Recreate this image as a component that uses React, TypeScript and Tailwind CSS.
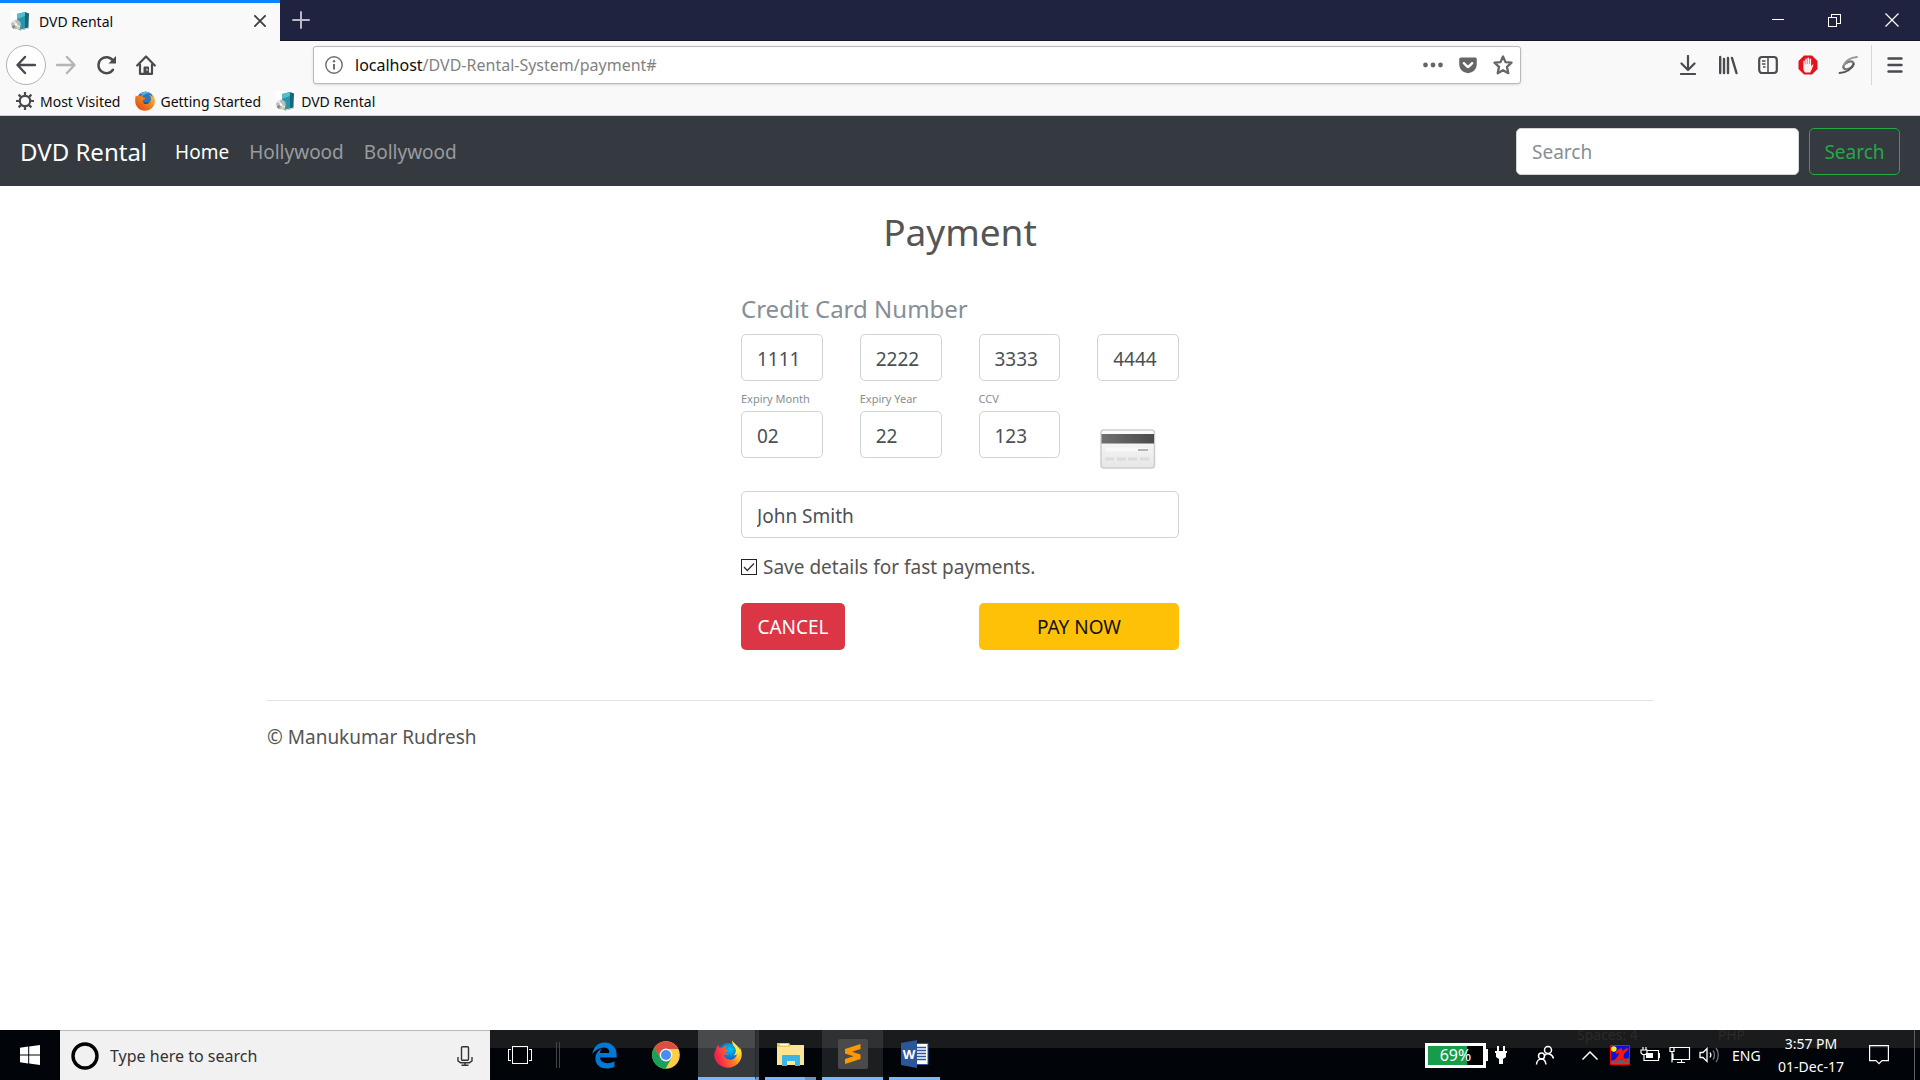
import type { ReactNode } from "react";
import { FaGetPocket } from "react-icons/fa";
import { FaEdgeLegacy } from "react-icons/fa6";

const uiFont = "font-['Noto_Sans',sans-serif]";

function DvdIcon() {
  return (
    <svg viewBox="0 0 20 20" className="size-5 shrink-0" aria-hidden="true">
      <rect width="20" height="20" fill="#fff" />
      <path d="M6 3 14 1v15l-6 3-2-2Z" fill="#2796a8" />
      <path d="M6 3 14 1v4L6 8Z" fill="#55bccb" />
      <path d="m14 1 4 1.5-.6 15L9 19.4l-.8-.7L14 16Z" fill="#146879" />
      <path d="m9 18.5 8.4-2v1L9 19.4Z" fill="#dfe9ea" />
      <circle cx="5" cy="13.5" r="4.8" fill="#b8bcbc" />
      <path d="M5 13.5 1 11a4.8 4.8 0 0 1 3-2.2ZM5 13.5l4.4 2a4.8 4.8 0 0 1-2.6 2.4Z" fill="#e9e9e9" />
      <path d="M5 13.5 3 18a4.8 4.8 0 0 1-2.3-2.4Z" fill="#85898a" />
      <circle cx="5" cy="13.5" r="1.3" fill="#fff" />
      <circle cx="7.3" cy="17.2" r="1.6" fill="#d9d39a" />
    </svg>
  );
}

function FirefoxOld() {
  return (
    <svg viewBox="0 0 20 20" className="size-5 shrink-0" aria-hidden="true">
      <defs>
        <linearGradient id="ffo" x1="0" y1="1" x2="1" y2="0">
          <stop offset="0" stopColor="#d8401c" />
          <stop offset=".6" stopColor="#f28a1c" />
          <stop offset="1" stopColor="#ffd84a" />
        </linearGradient>
      </defs>
      <circle cx="10.5" cy="9.2" r="8.8" fill="#2f78bd" />
      <path d="M5 2.5C8 .6 13 0 16 3c-2-1-5-1-7 1Z" fill="#5fb4e6" />
      <path d="M1 4c.3 1 .7 1.3 1.3 1.4C3 4.700 5 4.500 6 5c.7-.8 1.700-1.200 2.600-1.200-1 .8-1.300 1.700-1.200 2.500l2.900.7c-.2 1-1.500 1.500-2.700 2.200.5 2.800 3 3.800 5.400 3 2-.7 3.200-2.500 3-4.700-.2-1.800-1-3-2-4 2 .7 3 2 3.500 3.200 0-1.600-.4-2.800-1.300-4C19 4.500 20.300 7.500 19.900 11c-.6 5-4.700 8.800-9.900 8.800C4.400 19.800.2 15.500.2 10 .2 7.500.3 5.500 1 4Z" fill="url(#ffo)" />
      <path d="M10 11c1 1 3 1 4.500-.3-.8 2.600-4.500 3.300-6.500 1Z" fill="#1f4f8f" />
    </svg>
  );
}

function FirefoxNew() {
  return (
    <svg viewBox="0 0 28 28" className="size-7" aria-hidden="true">
      <defs>
        <linearGradient id="ffn" x1=".1" y1=".6" x2="1" y2=".3">
          <stop offset="0" stopColor="#f5204f" />
          <stop offset=".45" stopColor="#ff6a2b" />
          <stop offset=".8" stopColor="#ffb82a" />
          <stop offset="1" stopColor="#fff04a" />
        </linearGradient>
        <radialGradient id="ffb" cx=".6" cy=".3" r=".6">
          <stop offset="0" stopColor="#00c4f5" />
          <stop offset="1" stopColor="#0a4fc9" />
        </radialGradient>
      </defs>
      <circle cx="14" cy="13.500" r="10.500" fill="url(#ffb)" />
      <path d="M18.500.3c-.5 3 .4 4.700 2 6.500 2.300 2.700 1.700 6.500-.6 8.600 1.500-.3 2.300-1 2.800-1.800-.3 4-3.400 6.500-7.200 6-3.500-.4-5.300-2.500-5.300-4.800 1.300-.6 2.800-.5 4 .3-.3-1.300-1.500-2-3.200-1.800.2-1.300 2.500-1.800 3-3-.1-.7-1.500-.7-3-1 .2-1.500.9-2.700 2.100-3.500-1.900 0-3.400.8-4.500 2-1-.3-2-.3-2.900-.1-.6-.7-.9-1.600-1-2.600C3 6.300 2 8 1.600 10.200.4 12 .1 14 .3 16c1 6.800 6.700 11.700 13.700 11.700 7.800 0 13.700-6 13.700-13.400 0-3.200-.9-5.500-2.300-7.200.1 1 .1 1.600-.1 2.500C24.500 5.500 18.700 3.500 18.500.3Z" fill="url(#ffn)" />
      <path d="M18.500.3c-.5 3 .4 4.700 2 6.500 2.300 2.700 1.700 6.500-.6 8.600 2-.3 3.500-1.500 4.200-3 .3 3-1 6-3.600 8 3.500-1.200 5.300-5.500 4.800-10.800C24.500 5.500 18.700 3.500 18.500.3Z" fill="#ffe83c" />
    </svg>
  );
}

function ChromeIcon() {
  return (
    <svg viewBox="0 0 28 28" className="size-7" aria-hidden="true">
      <circle cx="14" cy="14" r="13.800" fill="#ffcd42" />
      <path d="M14 14 2 7.100A13.800 13.800 0 0 1 26 7.200L26.300 8H14Z" fill="#dc4e41" />
      <path d="M2 7.100A13.800 13.800 0 0 0 13.500 27.800L19.500 17 14 14 8 17Z" fill="#1b9f5d" />
      <path d="M2 7.100 8.500 17 14 14V8Z" fill="#dc4e41" />
      <path d="M2 7.100 8.800 17.300A6.300 6.300 0 0 0 15.500 20L13.500 27.800A13.800 13.800 0 0 1 2 7.100Z" fill="#1b9f5d" />
      <circle cx="14" cy="14" r="6.400" fill="#f1f1f1" />
      <circle cx="14" cy="14" r="5" fill="#4c8bf5" />
    </svg>
  );
}

function ToolbarIcon({ children, label, className = "size-10" }: { children: ReactNode; label: string; className?: string }) {
  return (
    <button type="button" aria-label={label} className={`flex items-center justify-center ${className}`}>
      {children}
    </button>
  );
}

function TitleBar() {
  return (
    <div className="flex h-[41px] items-stretch border-b border-[#14162c] bg-[#202340]">
      <div className="-mb-px flex w-[280px] items-center gap-2 border-t-[3px] border-[#0a84ff] bg-[#f9f9fa] pr-3 pb-0.5 pl-[11px]">
        <DvdIcon />
        <span className="flex-1 text-[14px] text-[#0c0c0d]">DVD Rental</span>
        <button type="button" aria-label="Close tab" className="flex size-4 items-center justify-center">
          <svg viewBox="0 0 12 12" className="size-3 stroke-[#3e3e40]" strokeWidth="1.800" strokeLinecap="round">
            <path d="M.9.9l10.200 10.200M11.100.9.9 11.100" />
          </svg>
        </button>
      </div>
      <ToolbarIcon label="New tab" className="w-[42px]">
        <svg viewBox="0 0 18 18" className="size-[18px] stroke-[#b9bac4]" strokeWidth="2" strokeLinecap="round">
          <path d="M9 1v16M1 9h16" />
        </svg>
      </ToolbarIcon>
      <div className="ml-auto flex stroke-white text-white">
        <ToolbarIcon label="Minimize" className="w-[57px]">
          <svg viewBox="0 0 12 12" className="size-3" fill="none" shapeRendering="crispEdges"><path d="M0 5.500h12" /></svg>
        </ToolbarIcon>
        <ToolbarIcon label="Restore" className="w-[57px]">
          <svg viewBox="0 0 13 13" className="size-[13px]" fill="none" shapeRendering="crispEdges"><path d="M.5 3.500h8v9h-8zM3.500 3.500v-3h9v9h-4" /></svg>
        </ToolbarIcon>
        <ToolbarIcon label="Close" className="w-[57px]">
          <svg viewBox="0 0 14 14" className="size-3.5" fill="none"><path d="m.5.5 13 13m0-13-13 13" strokeWidth="1.200" /></svg>
        </ToolbarIcon>
      </div>
    </div>
  );
}

function AddressRow() {
  return (
    <div className="flex h-[48px] items-center bg-[#f9f9fa] stroke-[#4a4a4f] pr-[3px] pl-[6px]">
      <button type="button" aria-label="Back" className="flex size-10 items-center justify-center rounded-full border border-[#b1b1b3] bg-white">
        <svg viewBox="0 0 20 20" className="size-5" fill="none" strokeWidth="2.400" strokeLinecap="round" strokeLinejoin="round"><path d="M19 10H2M9 2 1.500 10 9 18" /></svg>
      </button>
      <ToolbarIcon label="Forward">
        <svg viewBox="0 0 20 20" className="size-5 stroke-[#b5b5b7]" fill="none" strokeWidth="2.400" strokeLinecap="round" strokeLinejoin="round"><path d="M1 10h17M11 2l7.500 8L11 18" /></svg>
      </ToolbarIcon>
      <ToolbarIcon label="Reload">
        <svg viewBox="0 0 20 20" className="size-5" fill="none" strokeWidth="2.400" strokeLinecap="round"><path d="M17 14.800A8 8 0 1 1 17 5.600" /><path d="M20 1v7.500h-7.500Z" fill="#4a4a4f" stroke="none" /></svg>
      </ToolbarIcon>
      <ToolbarIcon label="Home">
        <svg viewBox="0 0 20 20" className="size-5" fill="none" strokeWidth="2.200" strokeLinecap="round" strokeLinejoin="round"><path d="M1.200 10.500 10 1.500l8.800 9" /><path d="M4 9.500V18.800h12V9.500" /><path d="M8 18v-6h4.500v6Z" fill="#4a4a4f" strokeWidth="1" /><path d="M11 14v1.500" stroke="#fff" strokeWidth="1" /></svg>
      </ToolbarIcon>
      <div className="mr-[147px] ml-[147px] flex h-[38px] flex-1 items-center rounded-[3px] border border-[#b9b9bb] bg-white px-[11px] shadow-sm">
        <svg viewBox="0 0 18 18" className="mr-[12px] size-[18px] stroke-[#6d6d6e]" fill="none" strokeWidth="1.400"><circle cx="9" cy="9" r="8.200" /><path d="M9 8v5.500" strokeWidth="2" /><circle cx="9" cy="5.200" r="1.200" fill="#6d6d6e" stroke="none" /></svg>
        <a href="#" className="flex-1 text-[16px] text-[#828283]"><span className="text-[#0c0c0d]">localhost</span>/DVD-Rental-System/payment#</a>
        <div className="flex items-center gap-[15px] text-[#666667]">
          <button type="button" aria-label="Page actions"><svg viewBox="0 0 20 20" className="size-5 stroke-none" fill="currentColor"><circle cx="2.500" cy="10" r="2.400" /><circle cx="10" cy="10" r="2.400" /><circle cx="17.500" cy="10" r="2.400" /></svg></button>
          <button type="button" aria-label="Save to Pocket"><FaGetPocket className="size-5 stroke-none" /></button>
          <button type="button" aria-label="Bookmark" className="-mr-1"><svg viewBox="0 0 20 20" className="size-5 stroke-[#666667]" fill="none" strokeWidth="2.300" strokeLinejoin="round"><path d="m10 1.500 2.500 5.600 6 .6-4.500 4.200 1.300 6.300L10 15.200l-5.300 3 1.300-6.300L1.500 7.700l6-.6Z" /></svg></button>
        </div>
      </div>
      <div className="flex items-center">
        <ToolbarIcon label="Downloads"><svg viewBox="0 0 20 20" className="size-5" fill="none" strokeWidth="2.200" strokeLinecap="round" strokeLinejoin="round"><path d="M10 1v13M3.500 8.500 10 15l6.500-6.500M3 19h14" /></svg></ToolbarIcon>
        <ToolbarIcon label="Library"><svg viewBox="0 0 20 20" className="size-5" fill="none" strokeWidth="2.400" strokeLinecap="round"><path d="M2.200 2v16M6 4v14M10 3v15M14 3l4.500 15" /></svg></ToolbarIcon>
        <ToolbarIcon label="Sidebars"><svg viewBox="0 0 20 20" className="size-5" fill="none" strokeWidth="2.200"><rect x="1.200" y="2" width="17.600" height="16" rx="3" /><path d="M10 2v16M4 6h3.500M4 9h3.500M5 12h2.500" strokeWidth="1.500" /></svg></ToolbarIcon>
        <ToolbarIcon label="Ad blocker">
          <svg viewBox="0 0 20 20" className="size-5 stroke-none"><path d="M6 .500h8L19.500 6v8L14 19.500H6L.500 14V6Z" fill="#e51219" /><path d="M7 17.500C5.700 16 5.200 14 5.400 11.500V6.500c0-1.200 1.400-1.200 1.400 0v3h.5V4.300c0-1.200 1.600-1.200 1.600 0V9h.5V3.300c0-1.200 1.600-1.200 1.600 0V9h.5V4.300c0-1.200 1.600-1.200 1.600 0v7.200c.7-1.100 1.300-2.200 2.400-1.900-.9 2.800-1.800 5.600-3.300 7.900Z" fill="#f5f0f0" /></svg>
        </ToolbarIcon>
        <ToolbarIcon label="Extension">
          <svg viewBox="0 0 20 20" className="size-5" fill="none" strokeLinecap="round"><ellipse cx="10.500" cy="10.300" rx="5.500" ry="3.300" transform="rotate(-28 10.500 10.300)" stroke="#777" strokeWidth="2.400" /><path d="M19 2C14 2.500 8 5 5.800 10" stroke="#999" strokeWidth="1.800" /><path d="M1.500 18C8 17.500 13.500 14.500 15.500 9" stroke="#555" strokeWidth="1.800" /></svg>
        </ToolbarIcon>
      </div>
      <div className="ml-[3px] h-10 w-px bg-[#d7d7db]" />
      <ToolbarIcon label="Menu" className="h-10 w-[45px]"><svg viewBox="0 0 16 18" className="h-[18px] w-4" fill="none" strokeWidth="2.400" strokeLinecap="round"><path d="M1.500 2.500h13M1.500 9h13M1.500 15.500h13" /></svg></ToolbarIcon>
    </div>
  );
}

function Bookmarks() {
  return (
    <div className="flex h-[27px] items-center gap-[15px] border-b border-[#d0d0d2] bg-[#f9f9fa] pb-0.5 pl-[15px] text-[14px] text-[#0c0c0d]">
      <a href="#" className="flex items-center gap-[5px]">
        <svg viewBox="0 0 20 20" className="size-5" fill="none" stroke="#4a4a4f"><circle cx="10" cy="10" r="5.200" strokeWidth="2.200" /><path d="M10 1v4M10 15v4M1 10h4M15 10h4M3.600 3.600l2.800 2.800M13.600 13.600l2.800 2.800M3.600 16.400l2.800-2.800M13.600 6.400l2.800-2.800" strokeWidth="2.200" /></svg>
        Most Visited
      </a>
      <a href="#" className="flex items-center gap-[5px]"><FirefoxOld />Getting Started</a>
      <a href="#" className="flex items-center gap-[5px]"><DvdIcon />DVD Rental</a>
    </div>
  );
}

function SiteNav() {
  return (
    <nav className="flex h-[70px] items-center bg-[#343a40] px-5 text-[19px]">
      <a href="#" className="mr-7 pt-0.5 text-[24px] text-white">DVD Rental</a>
      <div className="flex gap-5 pt-0.5 text-[#999c9f]">
        <a href="#" className="text-white">Home</a>
        <a href="#">Hollywood</a>
        <a href="#">Bollywood</a>
      </div>
      <form className="ml-auto flex gap-2.5" onSubmit={(e) => e.preventDefault()}>
        <input type="search" aria-label="Search" placeholder="Search" className="h-[47px] w-[283px] rounded-[5px] border border-[#ced4da] bg-white px-[15px] pt-0.5 placeholder:text-[#868e96]" />
        <button type="submit" className="h-[47px] w-[91px] rounded-[5px] border border-[#28a745] pt-0.5 text-[#28a745]">Search</button>
      </form>
    </nav>
  );
}

function Field({ value, label, id }: { value: string; label: string; id: string }) {
  return <input id={id} aria-label={label} defaultValue={value} className="h-[47px] w-full min-w-0 rounded-[5px] border border-[#ced4da] bg-white px-[15px] pt-0.5 text-[#495057]" />;
}

function CardIcon() {
  return (
    <svg viewBox="0 0 56 40" className="h-10 w-14" role="img" aria-label="Credit card">
      <defs>
        <linearGradient id="cardbody" x1="0" y1="0" x2="0" y2="1"><stop offset="0" stopColor="#fdfdfd" /><stop offset="1" stopColor="#e6e6e6" /></linearGradient>
        <linearGradient id="cardband" x1="0" y1="0" x2="1" y2="0"><stop offset="0" stopColor="#707070" /><stop offset="1" stopColor="#4b4b4b" /></linearGradient>
      </defs>
      <rect x="1" y="1" width="53.500" height="38" rx="3" fill="url(#cardbody)" stroke="#cdcdcd" strokeWidth="1.500" />
      <rect x="1.500" y="5" width="52.500" height="9.500" fill="url(#cardband)" />
      <rect x="5" y="18" width="44" height="5" fill="#f9f9f9" stroke="#e9e9e9" strokeWidth=".5" />
      <path d="M38 21h10" stroke="#aaa" strokeWidth="1.800" />
      <path d="M5 30h9M17 30h9M28 30h9M40 30h9" stroke="#dcdcdc" strokeWidth="3" />
    </svg>
  );
}

const cardNumbers = ["1111", "2222", "3333", "4444"];
const cardDetails = [
  { id: "month", label: "Expiry Month", value: "02" },
  { id: "year", label: "Expiry Year", value: "22" },
  { id: "ccv", label: "CCV", value: "123" },
];

function PaymentPage() {
  return (
    <main className="flex-1 bg-white px-[267px] text-[19px] text-[#555]">
      <h2 className="pt-5 text-center text-[37px] leading-[52px]">Payment</h2>
      <form className="mx-auto w-[438px] pt-8" onSubmit={(e) => e.preventDefault()}>
        <fieldset>
          <legend className="pb-1.5 text-[24px] leading-[38px] text-[#868e96]">Credit Card Number</legend>
          <div className="grid grid-cols-4 gap-x-[37px]">
            {cardNumbers.map((n, i) => (
              <Field key={n} id={`card-${i}`} label={`Card number part ${i + 1}`} value={n} />
            ))}
          </div>
        </fieldset>
        <div className="grid grid-cols-4 gap-x-[37px] pt-2">
          {cardDetails.map((d) => (
            <div key={d.id}>
              <label htmlFor={d.id} className="block pb-0.5 text-[11px] leading-5 whitespace-nowrap text-[#868e96]">{d.label}</label>
              <Field id={d.id} label={d.label} value={d.value} />
            </div>
          ))}
          <div className="pt-10 pl-[3px]"><CardIcon /></div>
        </div>
        <div className="pt-[22px]"><Field id="name" label="Name on card" value="John Smith" /></div>
        <label className="mt-[14px] flex items-center gap-1.5 leading-[30px]">
          <span className="relative grid size-4 place-items-center">
            <input type="checkbox" defaultChecked className="size-4 appearance-none border border-[#222] bg-white" />
            <svg viewBox="0 0 16 16" className="pointer-events-none absolute inset-0 size-4" fill="none" stroke="#333" strokeWidth="1.300"><path d="m3 8 3.300 3.500L13 4.500" /></svg>
          </span>
          Save details for fast payments.
        </label>
        <div className="mt-[21px] grid grid-cols-[104px_200px] justify-between">
          <button type="button" className="h-[47px] rounded-[5px] bg-[#dc3545] pt-0.5 text-white">CANCEL</button>
          <button type="submit" className="h-[47px] rounded-[5px] bg-[#ffc107] pt-0.5 text-[#111]">PAY NOW</button>
        </div>
      </form>
      <footer className="mt-[50px] border-t border-[#e2e3e4] pt-[21px] leading-[30px]">© Manukumar Rudresh</footer>
    </main>
  );
}

function Tray() {
  return (
    <div className="relative ml-auto flex items-center stroke-white">
      <div className="flex items-center" role="img" aria-label="Battery 69%">
        <div className="h-[25px] w-[61px] border-[3px] border-white bg-[linear-gradient(to_right,#169c4b_70%,#000_70%)] text-center text-[16px] leading-[19px] text-white">69%</div>
        <div className="h-3 w-0.5 bg-white" />
      </div>
      <svg viewBox="0 0 12 18" className="ml-[7px] h-[18px] w-3 stroke-none" fill="#fff" aria-hidden="true"><path d="M2 0h2v5h4V0h2v5h2v2h-1v4l-3 2v5H4v-5l-3-2V7H0V5h2Z" /></svg>
      <ToolbarIcon label="People" className="ml-[26px] h-[50px] w-6"><svg viewBox="0 0 20 20" className="size-5" fill="none" strokeWidth="1.500"><circle cx="13" cy="5" r="3.500" /><circle cx="6.500" cy="11" r="3" /><path d="M1.500 19.500c0-3 2-5.500 5-5.500s4 2 4.500 5.500M9.500 10.500c2-2.500 7.500-2.500 9 3" /></svg></ToolbarIcon>
      <ToolbarIcon label="Show hidden icons" className="ml-[23px] h-[50px] w-5"><svg viewBox="0 0 16 9" className="h-[9px] w-4" fill="none" strokeWidth="1.500"><path d="m.5 8.500 7.500-7.500 7.500 7.500" /></svg></ToolbarIcon>
      <svg viewBox="0 0 20 20" className="ml-[10px] size-5 stroke-none" aria-hidden="true"><path d="M.500.500h19v19H.500Z" fill="#0a10d8" stroke="#f00" /><path d="M1 19v-3l6-2 5 1 7-2v6Z" fill="#6b5c64" /><circle cx="3.800" cy="4" r="2.800" fill="#ffec1a" /><path d="m9 4 3-1 .5 3L17 3l1.500 1-4.500 5-.5 3.500 4.500 3-1 2-5.500-3-4.500 1.500L5 18l-1-2 4-5 1-3-3 1-.5-2Z" fill="#f3190c" /></svg>
      <svg viewBox="0 0 20 20" className="ml-[10px] size-5" fill="none" strokeWidth="1.200" aria-hidden="true"><path d="M7 5.500h11.500v10H4v-4M18.500 8.500h1v4h-1M3 2v3M6 2v3M1 5h6v3L5.500 9.500h-3L1 8ZM4 9.500v3" /><path d="M6 8h7v5H6Z" fill="#fff" stroke="none" /></svg>
      <svg viewBox="0 0 22 20" className="ml-[9px] h-5 w-[22px]" fill="none" strokeWidth="1.200" aria-hidden="true"><path d="M5 2.500h15.500v12H4v-6M12.500 14.500v3M8 17.500h8M1 2.500h4v4H1ZM3 6.500v11" /></svg>
      <svg viewBox="0 0 22 20" className="ml-[8px] h-5 w-[22px]" fill="none" strokeWidth="1.300" aria-hidden="true"><path d="M1 7.500h3l4-4v13l-4-4H1ZM11 7.500c1 1.500 1 3.500 0 5" /><path d="M14 5.500c2 2.500 2 6.500 0 9M17 3c3 4 3 10 0 14" stroke="#777" /></svg>
      <span className="ml-[11px] w-[30px] text-[14px] text-white">ENG</span>
      <div className="ml-[12px] w-[74px] text-center text-[14px] leading-[23px] whitespace-nowrap text-white">
        <div>3:57 PM</div>
        <div>01-Dec-17</div>
      </div>
      <ToolbarIcon label="Notifications" className="ml-[19px] h-[50px] w-6"><svg viewBox="0 0 20 20" className="size-5" fill="none" strokeWidth="1.200"><path d="M.6.600h18.800v15h-6.400L10 18.600 7 15.600H.6Z" /></svg></ToolbarIcon>
      <div className="mr-[5px] ml-[23px] h-[50px] w-px bg-[#5c5e60]" />
    </div>
  );
}

function Taskbar() {
  return (
    <div className="relative flex h-[50px] items-stretch bg-[linear-gradient(#1a1b1d_18px,#010409_18px)]">
      <div className="absolute top-0 right-[175px] flex w-[168px] justify-between text-[14px] leading-[10px] text-[#2d2a28]" aria-hidden="true">
        <span>Spaces: 4</span>
        <span>PHP</span>
      </div>
      <ToolbarIcon label="Start" className="w-[60px] bg-[#010409]"><svg viewBox="0 0 20 20" className="size-5" fill="#fff"><path d="M0 2.800 8.200 1.600v7.900H0ZM9.200 1.400 20 0v9.500H9.200ZM0 10.500h8.200v7.900L0 17.200ZM9.200 10.500H20V20L9.200 18.600Z" /></svg></ToolbarIcon>
      <label className="flex w-[430px] items-center border-t border-[#b8b8b8] bg-[#f1f1f1] pr-[17px] pl-[11px]">
        <svg viewBox="0 0 28 28" className="size-7" aria-hidden="true"><circle cx="14" cy="14" r="12" fill="none" stroke="#000" strokeWidth="3.400" /></svg>
        <input aria-label="Search Windows" placeholder="Type here to search" className="ml-[11px] min-w-0 flex-1 bg-transparent text-[16px] placeholder:text-[#333]" />
        <svg viewBox="0 0 16 20" className="h-5 w-4" fill="none" stroke="#333" strokeWidth="1.400" aria-hidden="true"><rect x="4.500" y=".7" width="7" height="13.500" rx="1" /><path d="M1 11v4l2.500 1.700h9L15 15v-4M8 17v2.300M4.500 19.300h7" /></svg>
      </label>
      <ToolbarIcon label="Task view" className="ml-[16px] w-7"><svg viewBox="0 0 24 18" className="h-[18px] w-6" fill="none" stroke="#fff" shapeRendering="crispEdges"><path d="M4.500.500h15v17h-15ZM3 3.500H.500v11H3M21 3.500h2.500v11H21" /></svg></ToolbarIcon>
      <div className="my-3 ml-[22px] w-1 border-x border-[#444]" />
      <ToolbarIcon label="Edge" className="ml-[14px] w-[60px]"><FaEdgeLegacy className="size-[27px] text-[#0078d7]" /></ToolbarIcon>
      <ToolbarIcon label="Chrome" className="w-[64px]"><ChromeIcon /></ToolbarIcon>
      <button type="button" aria-label="Firefox" className="flex w-[61px] bg-[linear-gradient(#484a4c_18px,#36393c_18px)]">
        <span className="flex h-full w-[57px] items-center justify-center border-b-[3px] border-[#76b9ff] pl-0.5"><FirefoxNew /></span>
        <span className="h-full w-1 border-b-[3px] border-l border-b-[#6594c8] border-l-[#25282a] bg-[#303336]" />
      </button>
      <button type="button" aria-label="File Explorer" className="mr-[6px] ml-[6px] flex w-[51px]">
        <span className="flex h-full w-10 items-center justify-end border-b-[3px] border-[#76b9ff]">
          <svg viewBox="0 0 28 24" className="h-6 w-7"><path d="M0 1h12l1.500 2H27v20H0Z" fill="#f3c653" /><path d="M0 5h12l2-2h13v20H0Z" fill="#ffe493" /><path d="M3 2h8v1.500H3Z" fill="#fff" /><path d="M5 24V14q0-1 1-1h16q1 0 1 1v10h-5v-5h-8v5Z" fill="#3bb5e7" /></svg>
        </span>
        <span className="h-full flex-1 border-b-[3px] border-[#6594c8]" />
      </button>
      <button type="button" aria-label="Sublime Text" className="flex w-[61px] items-center justify-center border-b-[3px] border-[#76b9ff] bg-[linear-gradient(#303133_18px,#1c1f22_18px)]">
        <svg viewBox="0 0 30 30" className="size-[30px]"><rect width="30" height="30" rx="2" fill="#4a4a4a" /><path d="m7 10 15.500-5v5L14 12.800l8.500 2.700v4.500L7 25v-5l8.500-2.700L7 14.500Z" fill="#ff9800" /></svg>
      </button>
      <button type="button" aria-label="Word" className="ml-[6px] flex w-[51px] items-center justify-center border-b-[3px] border-[#76b9ff]">
        <svg viewBox="0 0 28 28" className="size-7"><path d="M15 3.500h12v21H15Z" fill="#fff" stroke="#2b579a" /><path d="M16 7.500h9M16 10.500h9M16 13.500h9M16 16.500h9M16 19.500h9" stroke="#2b579a" strokeWidth="1.400" /><path d="M0 3 16 0v28L0 25Z" fill="#2b579a" /><text x="8" y="18.500" textAnchor="middle" fontSize="13" fontWeight="700" fill="#fff">W</text></svg>
      </button>
      <Tray />
    </div>
  );
}

export default function App() {
  return (
    <div className={`flex min-h-screen flex-col bg-white ${uiFont}`}>
      <header>
        <TitleBar />
        <AddressRow />
        <Bookmarks />
        <SiteNav />
      </header>
      <PaymentPage />
      <Taskbar />
    </div>
  );
}
